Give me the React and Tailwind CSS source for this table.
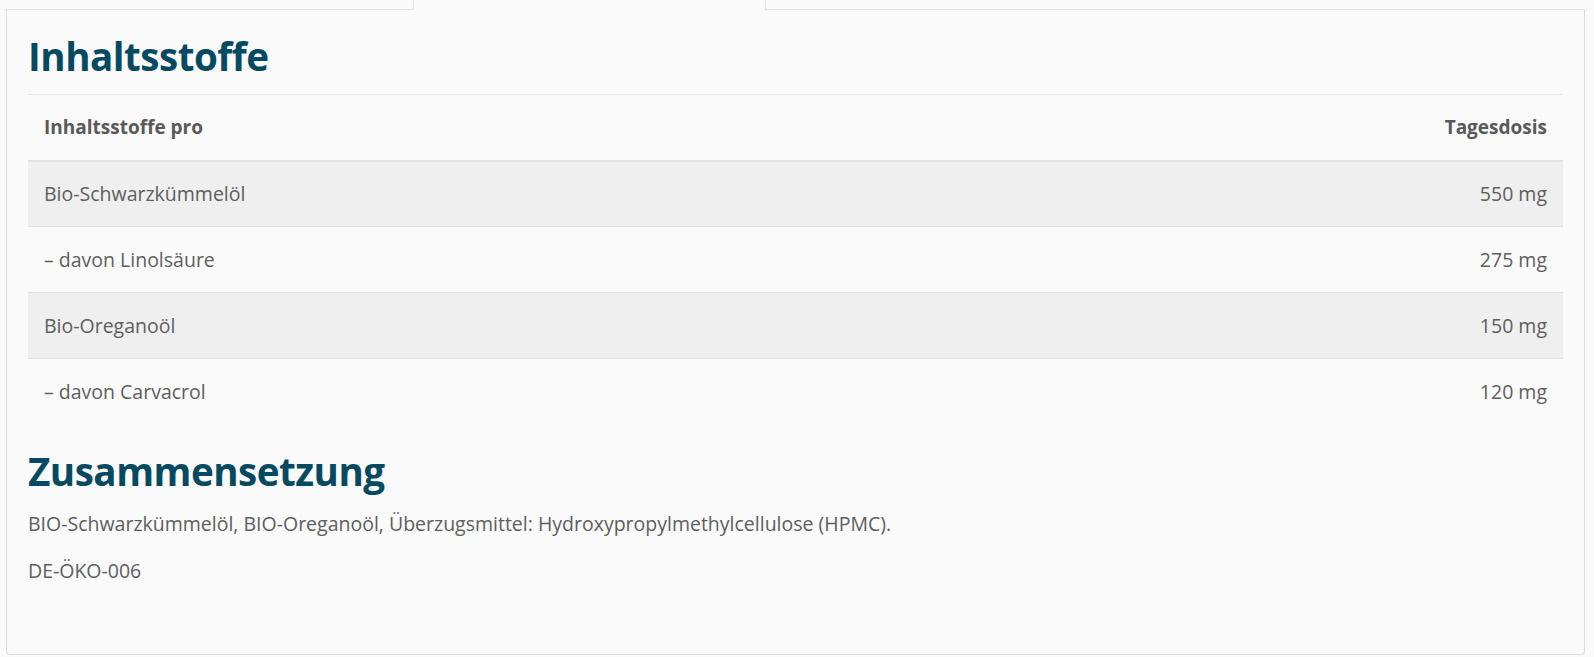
const rows = [
  { name: 'Bio-Schwarzkümmelöl', dose: '550 mg' },
  { name: '– davon Linolsäure', dose: '275 mg' },
  { name: 'Bio-Oreganoöl', dose: '150 mg' },
  { name: '– davon Carvacrol', dose: '120 mg' },
];

export default function App() {
  return (
    <div className="min-h-screen bg-[#fafafa] pl-[6px] pr-[9px] font-['Open_Sans',sans-serif]">
      {/* tabs (cropped at top) */}
      <div className="flex h-[10px]">
        <div className="w-[408px] border-b border-r border-[#e2e2e2]" />
        <div className="w-[352px] border-r border-[#e2e2e2]" />
        <div className="flex-1 border-b border-[#e2e2e2]" />
      </div>

      <div className="h-[645px] rounded-b border border-t-0 border-[#dcdcdc] bg-[#fafafa] px-[21px] pt-[22px]">
        <h2 className="text-[38.6px] font-bold leading-[48px] tracking-[-0.5px] text-[#064a62]">Inhaltsstoffe</h2>

        <table className="mt-[14px] w-full border-t border-[#e5e5e5] text-[19.5px] text-[#5e5e5e]">
          <thead>
            <tr className="border-b-2 border-[#e3e3e3]">
              <th className="h-[66px] px-4 text-left text-[19px] font-bold text-[#595959]">Inhaltsstoffe pro</th>
              <th className="h-[66px] px-4 text-right text-[19px] font-bold text-[#595959]">Tagesdosis</th>
            </tr>
          </thead>
          <tbody>
            {rows.map((r, i) => (
              <tr
                key={r.name}
                className={(i % 2 === 0 ? 'bg-[#efefef] ' : '') + (i < rows.length - 1 ? 'border-b border-[#e0e0e0]' : '')}
              >
                <td className="h-[66px] px-4 text-left">{r.name}</td>
                <td className="h-[66px] px-4 text-right">{r.dose}</td>
              </tr>
            ))}
          </tbody>
        </table>

        <h2 className="mt-[22px] text-[38.6px] font-bold leading-[48px] tracking-[-0.5px] text-[#064a62]">Zusammensetzung</h2>
        <p className="mt-[15px] text-[19.5px] leading-[28px] text-[#5e5e5e]">
          BIO-Schwarzkümmelöl, BIO-Oreganoöl, Überzugsmittel: Hydroxypropylmethylcellulose (HPMC).
        </p>
        <p className="mt-[19px] text-[19.5px] leading-[28px] text-[#5e5e5e]">DE-ÖKO-006</p>
      </div>
    </div>
  );
}
